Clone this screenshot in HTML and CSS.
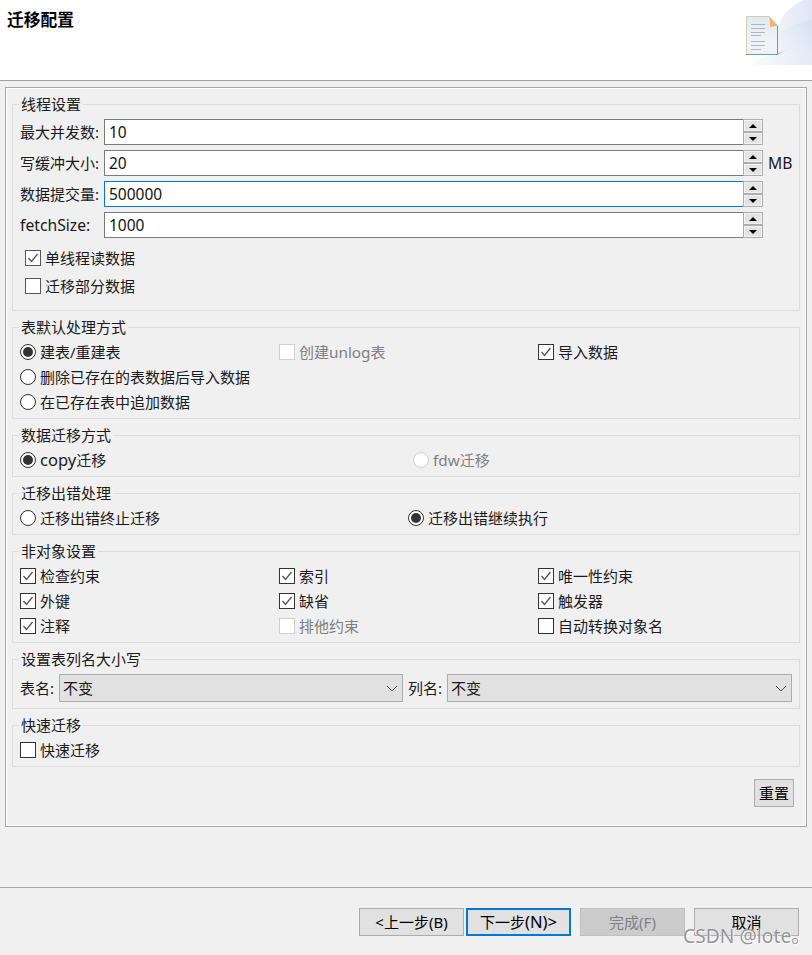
FILE: index.html
```html
<!DOCTYPE html>
<html lang="zh-CN">
<head>
<meta charset="utf-8">
<title>迁移配置</title>
<link rel="stylesheet" href="styles.css">
</head>
<body>
<header class="head">
  <h1 class="head-title">迁移配置</h1>
  <svg class="head-art" width="72" height="66" viewBox="0 0 72 66" aria-hidden="true">
    <defs>
      <linearGradient id="wash" x1="0" y1="0" x2="1" y2="0">
        <stop offset="0" stop-color="#fff"/><stop offset="0.5" stop-color="#f0f3fa"/><stop offset="1" stop-color="#dfe6f5"/>
      </linearGradient>
      <linearGradient id="lobe" x1="0" y1="1" x2="1" y2="0">
        <stop offset="0" stop-color="#fff" stop-opacity="0"/><stop offset="1" stop-color="#d6dff2"/>
      </linearGradient>
      <linearGradient id="sheet" x1="0" y1="0" x2="0" y2="1">
        <stop offset="0" stop-color="#e0e8ef"/><stop offset="0.7" stop-color="#f2f5f7"/><stop offset="1" stop-color="#eef2f4"/>
      </linearGradient>
      <linearGradient id="shade" x1="0" y1="1" x2="1" y2="0">
        <stop offset="0" stop-color="#b4b8c4"/><stop offset="1" stop-color="#b4b8c4" stop-opacity="0"/>
      </linearGradient>
    </defs>
    <path d="M63 0C50 7 42 14 38 26L38 48C30 56 14 62 0 65H72V0Z" fill="url(#wash)"/>
    <path d="M38 34C48 26 60 22 72 20V65H20C30 58 36 48 38 34Z" fill="url(#lobe)"/>
    <path d="M30 55H38L56 44C48 50 40 53 30 55Z" fill="url(#shade)"/>
    <path d="M6 16H29L37 25V55H6Z" fill="url(#sheet)"/>
    <path d="M6.500 55V16.500H29" fill="none" stroke="#cfd0b4"/>
    <path d="M6 54.500H37.500V26" fill="none" stroke="#6f9c9c"/>
    <path d="M29 16C30 20 30 23 30 27C33 26 35 26 38 26Z" fill="#efb469"/>
    <g stroke="#a9b7ca" stroke-width="1">
      <path d="M11 24.500H25M11 28.500H25M11 32.500H25M11 35.500H21M11 41.500H25M11 45.500H25M11 49.500H21"/>
    </g>
  </svg>
</header>

<main class="panel">
  <section class="group group-threads">
    <div class="legend">线程设置</div>
    <div class="field-row">
      <span class="field-label">最大并发数:</span>
      <div class="spin-input"><span class="value">10</span></div>
      <div class="spinner"><span class="spin-btn"><i class="arrow up"></i></span><span class="spin-btn"><i class="arrow down"></i></span></div>
    </div>
    <div class="field-row">
      <span class="field-label">写缓冲大小:</span>
      <div class="spin-input"><span class="value">20</span></div>
      <div class="spinner"><span class="spin-btn"><i class="arrow up"></i></span><span class="spin-btn"><i class="arrow down"></i></span></div>
      <span class="unit">MB</span>
    </div>
    <div class="field-row">
      <span class="field-label">数据提交量:</span>
      <div class="spin-input focused"><span class="value">500000</span></div>
      <div class="spinner"><span class="spin-btn"><i class="arrow up"></i></span><span class="spin-btn"><i class="arrow down"></i></span></div>
    </div>
    <div class="field-row">
      <span class="field-label lat">fetchSize:</span>
      <div class="spin-input"><span class="value">1000</span></div>
      <div class="spinner"><span class="spin-btn"><i class="arrow up"></i></span><span class="spin-btn"><i class="arrow down"></i></span></div>
    </div>
    <div class="thread-checks">
      <label class="opt"><span class="box soft"><svg viewBox="0 0 14 14"><path d="M2.500 7L5.500 10.500L11.500 3"/></svg></span>单线程读数据</label>
      <label class="opt"><span class="box soft"></span>迁移部分数据</label>
    </div>
  </section>

  <section class="group">
    <div class="legend">表默认处理方式</div>
    <div class="grid-3">
      <label class="opt"><span class="radio on"></span><span>建表/重建表</span></label>
      <label class="opt off"><span class="box"></span><span>创建<span class="lat-small">unlog</span>表</span></label>
      <label class="opt"><span class="box"><svg viewBox="0 0 14 14"><path d="M2.500 7L5.500 10.500L11.500 3"/></svg></span>导入数据</label>
      <label class="opt span-3"><span class="radio"></span>删除已存在的表数据后导入数据</label>
      <label class="opt span-3"><span class="radio"></span>在已存在表中追加数据</label>
    </div>
  </section>

  <section class="group">
    <div class="legend">数据迁移方式</div>
    <div class="grid-2">
      <label class="opt"><span class="radio on"></span><span><span class="lat-big">copy</span>迁移</span></label>
      <label class="opt off nudge"><span class="radio"></span><span><span class="lat-small">fdw</span>迁移</span></label>
    </div>
  </section>

  <section class="group">
    <div class="legend">迁移出错处理</div>
    <div class="grid-2">
      <label class="opt"><span class="radio"></span>迁移出错终止迁移</label>
      <label class="opt"><span class="radio on"></span>迁移出错继续执行</label>
    </div>
  </section>

  <section class="group">
    <div class="legend">非对象设置</div>
    <div class="grid-3">
      <label class="opt"><span class="box"><svg viewBox="0 0 14 14"><path d="M2.500 7L5.500 10.500L11.500 3"/></svg></span>检查约束</label>
      <label class="opt"><span class="box"><svg viewBox="0 0 14 14"><path d="M2.500 7L5.500 10.500L11.500 3"/></svg></span>索引</label>
      <label class="opt"><span class="box"><svg viewBox="0 0 14 14"><path d="M2.500 7L5.500 10.500L11.500 3"/></svg></span>唯一性约束</label>
      <label class="opt"><span class="box"><svg viewBox="0 0 14 14"><path d="M2.500 7L5.500 10.500L11.500 3"/></svg></span>外键</label>
      <label class="opt"><span class="box"><svg viewBox="0 0 14 14"><path d="M2.500 7L5.500 10.500L11.500 3"/></svg></span>缺省</label>
      <label class="opt"><span class="box"><svg viewBox="0 0 14 14"><path d="M2.500 7L5.500 10.500L11.500 3"/></svg></span>触发器</label>
      <label class="opt"><span class="box"><svg viewBox="0 0 14 14"><path d="M2.500 7L5.500 10.500L11.500 3"/></svg></span>注释</label>
      <label class="opt off"><span class="box"></span>排他约束</label>
      <label class="opt"><span class="box"></span>自动转换对象名</label>
    </div>
  </section>

  <section class="group group-case">
    <div class="legend">设置表列名大小写</div>
    <div class="select-row">
      <span class="select-label">表名:</span>
      <div class="select"><span>不变</span><svg class="chev" width="12" height="7" viewBox="0 0 12 7"><path d="M1 1L6 6L11 1"/></svg></div>
      <span class="select-label second">列名:</span>
      <div class="select wide"><span>不变</span><svg class="chev" width="12" height="7" viewBox="0 0 12 7"><path d="M1 1L6 6L11 1"/></svg></div>
    </div>
  </section>

  <section class="group">
    <div class="legend">快速迁移</div>
    <label class="opt"><span class="box"></span>快速迁移</label>
  </section>

  <div class="reset-row"><button class="btn reset" type="button">重置</button></div>
</main>

<footer class="foot">
  <button class="btn nav" type="button">&lt;上一步(B)</button>
  <button class="btn nav primary" type="button">下一步<span class="lat-big">(N)&gt;</span></button>
  <button class="btn nav disabled" type="button">完成(F)</button>
  <button class="btn nav" type="button">取消</button>
  <div class="watermark">CSDN @lote。</div>
</footer>
</body>
</html>
```
FILE: styles.css
```css
* { box-sizing: border-box; }

html, body {
  margin: 0;
  height: 100%;
}

body {
  position: relative;
  width: 812px;
  height: 955px;
  overflow: hidden;
  background: #f0f0f0;
  color: #1a1a1a;
  font-family: "Noto Sans", "Noto Sans CJK SC", sans-serif;
  font-size: 15px;
  line-height: 18px;
}

.lat { font-size: 15.700px; }
.lat-small { font-size: 15.300px; }
.lat-big { font-size: 16.500px; }

.head {
  display: flex;
  justify-content: space-between;
  height: 81px;
  background: #fff;
  border-bottom: 1px solid #a0a0a0;
}

.head-title {
  margin: 10px 0 0 7px;
  font-size: 16.750px;
  font-weight: 700;
  line-height: 20px;
  color: #000;
}

.head-art { display: block; }

.panel {
  width: 802px;
  height: 740px;
  margin: 6px 0 0 5px;
  padding: 16px 6px 0;
  border: 1px solid #a6a6a6;
  box-shadow: inset 0 0 0 1px #fff;
}

.group {
  margin-top: 16px;
  padding: 0 7px 4px;
  border: 1px solid #dcdcdc;
}

.group:first-child { margin-top: 0; }
.group-threads { padding-bottom: 12px; }
.group-case { padding-bottom: 6px; }

.legend {
  width: fit-content;
  height: 18px;
  margin: -10px 0 3px -1px;
  padding: 0 2px;
  background: #f0f0f0;
  white-space: nowrap;
}

.group-threads .legend,
.group-case .legend { margin-bottom: 6px; }

.field-row {
  display: flex;
  align-items: center;
  height: 26px;
  margin-top: 5px;
}

.legend + .field-row { margin-top: 0; }

.field-label {
  width: 84px;
  flex: none;
  white-space: nowrap;
}

.spin-input {
  display: flex;
  flex: none;
  align-items: center;
  width: 639px;
  height: 26px;
  padding-left: 4px;
  background: #fff;
  border: 1px solid #7a7a7a;
  border-right: 0;
}

.spin-input.focused { border-color: #0078d7; }

.value {
  font-size: 15.500px;
  color: #111;
}

.spinner {
  display: flex;
  flex: none;
  flex-direction: column;
  gap: 2px;
  width: 20px;
  height: 26px;
  padding: 1px;
  background: #adadad;
}

.spin-btn {
  display: flex;
  flex: 1;
  align-items: center;
  justify-content: center;
  background: #e4e4e4;
  border: 1px solid #f2f2f2;
}

.arrow {
  display: block;
  width: 0;
  height: 0;
  border-left: 4px solid transparent;
  border-right: 4px solid transparent;
}

.arrow.up { border-bottom: 4px solid #000; }
.arrow.down { border-top: 4px solid #000; }

.unit {
  flex: none;
  margin-left: 5px;
  font-size: 15.700px;
}

.thread-checks {
  display: flex;
  flex-direction: column;
  gap: 3px;
  margin: 7px 0 0 5px;
}

.opt {
  display: flex;
  align-items: center;
  gap: 4px;
  height: 25px;
  white-space: nowrap;
}

.opt.off { color: #808080; }
.nudge { margin-left: 5px; }

.box,
.radio {
  display: flex;
  flex: none;
  align-items: center;
  justify-content: center;
  width: 16px;
  height: 16px;
  background: #fff;
  border: 1px solid #333;
}

.box.soft { border-color: #555; }
.radio { border-radius: 50%; }

.radio.on::after {
  content: "";
  width: 10px;
  height: 10px;
  border-radius: 50%;
  background: #333;
}

.off .box,
.off .radio { border-color: #cfcfcf; }

.box svg {
  display: block;
  width: 14px;
  height: 14px;
  fill: none;
  stroke: #555;
  stroke-width: 1.300;
}

.grid-3 {
  display: grid;
  grid-template-columns: repeat(3, 259px);
}

.span-3 { grid-column: 1 / -1; }

.grid-2 {
  display: grid;
  grid-template-columns: repeat(2, 388px);
}

.select-row {
  display: flex;
  align-items: center;
  height: 28px;
}

.select-label {
  width: 39px;
  flex: none;
  white-space: nowrap;
}

.select-label.second { margin-left: 5px; }

.select {
  display: flex;
  align-items: center;
  justify-content: space-between;
  width: 344px;
  height: 28px;
  padding: 0 4px 0 3px;
  background: #e1e1e1;
  border: 1px solid #adadad;
}

.select.wide { width: 345px; }

.chev {
  fill: none;
  stroke: #555;
  stroke-width: 1;
}

.reset-row {
  display: flex;
  justify-content: flex-end;
  margin: 12px 6px 0 0;
}

.btn {
  height: 28px;
  padding: 0;
  background: #e1e1e1;
  border: 1px solid #adadad;
  color: #000;
  font: inherit;
  white-space: nowrap;
}

.reset { width: 40px; }

.foot {
  display: flex;
  margin-top: 60px;
  padding: 20px 0 0 359px;
  border-top: 1px solid #a6a6a6;
}

.nav { width: 105px; margin-right: 9px; }
.nav:first-child { margin-right: 2px; }

.primary { border: 2px solid #0078d7; }

.disabled {
  background: #cccccc;
  border-color: #bfbfbf;
  color: #808080;
}

.watermark {
  position: absolute;
  left: 683px;
  top: 924px;
  color: rgba(130, 130, 130, 0.85);
  font-size: 19.300px;
  line-height: 24px;
  text-shadow: 0 0 1px #fff, 1px 1px 0 rgba(255, 255, 255, 0.7);
  white-space: nowrap;
}
```
